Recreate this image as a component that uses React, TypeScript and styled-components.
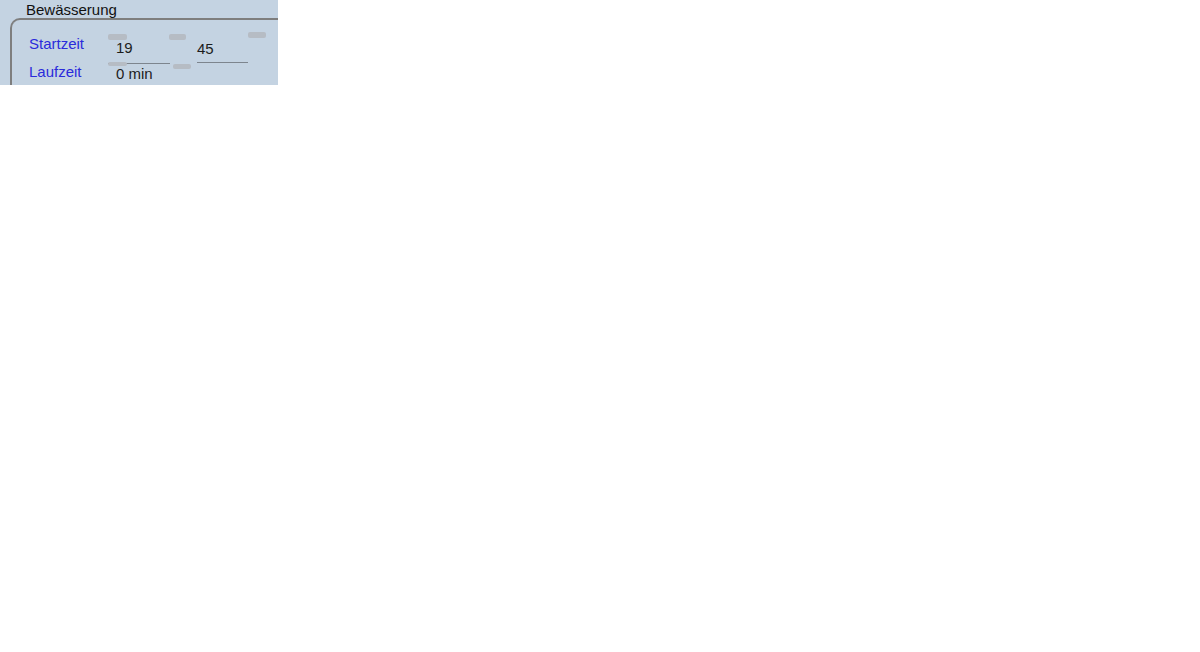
import React from "react";
import styled, { createGlobalStyle } from "styled-components";

const Global = createGlobalStyle`
  html, body { margin: 0; padding: 0; background: #ffffff; }
  body { font-family: "Liberation Sans", Arial, sans-serif; }
`;

const Panel = styled.div`
  width: 278px;
  height: 85px;
  background: #c4d3e2;
  overflow: hidden;
  font-family: "Liberation Sans", Arial, sans-serif;
  font-size: 15px;
  line-height: 17px;
`;

const Legend = styled.div`
  height: 17px;
  padding-top: 1px;
  padding-left: 26px;
  color: #111;
  white-space: nowrap;
`;

const Frame = styled.div`
  margin-left: 10px;
  width: 300px;
  height: 80px;
  border-top: 2px solid #7e7e7e;
  border-left: 2px solid #7e7e7e;
  border-top-left-radius: 10px;
  padding-left: 17px;
  padding-top: 12px;
  box-sizing: border-box;
`;

const Row = styled.div<{ $h: number }>`
  display: flex;
  align-items: flex-start;
  height: ${(p) => p.$h}px;
`;

const Label = styled.div<{ $top: number }>`
  width: 79px;
  flex: none;
  color: #2b2bdb;
  padding-top: ${(p) => p.$top}px;
  white-space: nowrap;
`;

const Field = styled.div<{ $w: number; $top: number; $bottom: number; $left: number; $line?: boolean }>`
  position: relative;
  flex: none;
  width: ${(p) => p.$w}px;
  padding: ${(p) => p.$top}px 0 ${(p) => p.$bottom}px ${(p) => p.$left}px;
  box-sizing: border-box;
  color: #1c1c1c;
  border-bottom: ${(p) => (p.$line ? "1px solid #7d858e" : "none")};
  white-space: nowrap;
`;

const Gap = styled.div<{ $w: number }>`
  flex: none;
  width: ${(p) => p.$w}px;
`;

const Nub = styled.span<{ $x: number; $y: number; $w: number; $h: number }>`
  position: absolute;
  left: ${(p) => p.$x}px;
  top: ${(p) => p.$y}px;
  width: ${(p) => p.$w}px;
  height: ${(p) => p.$h}px;
  border-radius: 2px;
  background: #b6bcc4;
`;

export default function App() {
  return (
    <>
      <Global />
      <Panel>
        <Legend>Bewässerung</Legend>
        <Frame>
          <Row $h={30}>
            <Label $top={3}>Startzeit</Label>
            <Field $w={62} $top={7} $bottom={7} $left={8} $line>
              <Nub $x={0} $y={2} $w={19} $h={6} />
              <Nub $x={61} $y={2} $w={17} $h={6} />
              19
            </Field>
            <Gap $w={27} />
            <Field $w={51} $top={8} $bottom={5} $left={0} $line>
              <Nub $x={51} $y={0} $w={18} $h={6} />
              45
            </Field>
          </Row>
          <Row $h={24}>
            <Label $top={1}>Laufzeit</Label>
            <Field $w={62} $top={3} $bottom={0} $left={8}>
              <Nub $x={0} $y={0} $w={19} $h={4} />
              <Nub $x={65} $y={2} $w={18} $h={5} />
              0 min
            </Field>
          </Row>
        </Frame>
      </Panel>
    </>
  );
}
